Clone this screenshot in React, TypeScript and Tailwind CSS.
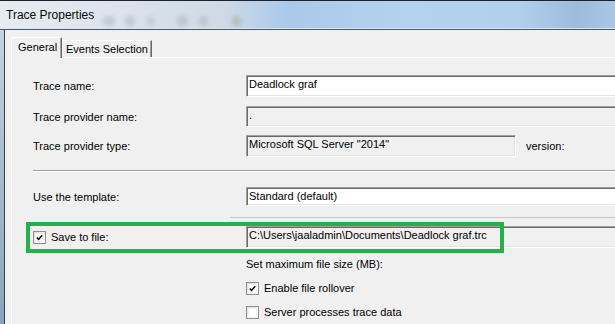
import React from "react";

function Sunken({ className = "", children }: { className?: string; children?: React.ReactNode }) {
  return (
    <div
      className={`shrink-0 border border-t-[#a0a0a0] border-l-[#a0a0a0] border-b-white border-r-white shadow-[inset_1px_1px_0_#696969,inset_-1px_-1px_0_#e3e3e3] pl-[2px] pt-px whitespace-nowrap overflow-hidden ${className}`}
    >
      {children}
    </div>
  );
}

function Check({ checked }: { checked?: boolean }) {
  return (
    <div className="w-[13px] h-[13px] shrink-0 border border-[#8e8f8f] bg-[linear-gradient(135deg,#dcdcdc,#ffffff)] p-px">
      <div className="w-full h-full bg-white border border-[#f4f4f4] flex items-center justify-center">
        {checked && (
          <svg width="9" height="9" viewBox="0 0 9 9">
            <path d="M1 4.5 L3.3 7 L8 1.5" fill="none" stroke="#000" strokeWidth="1.9" />
          </svg>
        )}
      </div>
    </div>
  );
}

const blobs = [
  { l: "left-[103px] w-[12px]", c: "bg-[#7c8894]" },
  { l: "left-[125px] w-[10px]", c: "bg-[#7c8894]" },
  { l: "left-[147px] w-[7px]", c: "bg-[#8894a0]" },
  { l: "left-[177px] w-[11px]", c: "bg-[#7c8894]" },
  { l: "left-[199px] w-[9px]", c: "bg-[#7c8894]" },
  { l: "left-[232px] w-[9px]", c: "bg-[#857540]" },
];

export default function App() {
  return (
    <div className="relative w-[615px] h-[324px] overflow-hidden bg-[#f0f0f0] font-['Liberation_Sans',Arial,sans-serif] text-[11px] leading-[14px] text-black">
      {/* title bar */}
      <div className="flex flex-col h-[30px]">
        <div className="h-px bg-[#1b232e]" />
        <div className="relative h-[27px] bg-[linear-gradient(to_right,#e6ebf0_0%,#dfe6ed_14%,#cfdae6_36%,#aac9ea_47%,#b4d2ef_66%,#b1d0ee_84%,#9dbcdc_94%,#a9c8e8_100%)]">
          {blobs.map((b, i) => (
            <div key={i} className={`absolute top-[15px] h-[10px] rounded-sm opacity-25 blur-[2px] ${b.l} ${b.c}`} />
          ))}
          <div className="relative pl-[6px] pt-[7px] text-[12px] leading-[14px] text-[#0a0a0a]">Trace Properties</div>
        </div>
        <div className="h-px bg-[#dfe8f1]" />
        <div className="h-px bg-[#4a5768]" />
      </div>

      <div className="flex h-[294px]">
        <div className="w-[4px] shrink-0 bg-[linear-gradient(to_bottom,#c4d2df,#88a3bf)]" />
        <div className="w-px shrink-0 bg-[#35414f]" />
        <div className="flex-1 min-w-0 pl-[6px] pt-[7px]">
          {/* tabs */}
          <div className="flex items-end h-[21px]">
            <div className="relative z-10 h-[21px] w-[51px] border-l border-t border-white border-r border-r-[#696969] shadow-[inset_-1px_0_0_#a0a0a0] bg-[#f0f0f0] pl-[6px] pt-[2px]">
              General
            </div>
            <div className="h-[17px] w-[90px] mb-px border-t border-white border-r border-r-[#696969] shadow-[inset_-1px_0_0_#a0a0a0] pl-[4px] pt-px whitespace-nowrap">
              Events Selection
            </div>
          </div>

          {/* panel */}
          <div className="-mt-px h-[300px] border-t border-l border-white pl-[21px]">
            <div className="mt-[17px] flex items-center h-[22px]">
              <div className="w-[213px] shrink-0">Trace name:</div>
              <Sunken className="w-[400px] h-[22px] bg-white">Deadlock graf</Sunken>
            </div>
            <div className="mt-[9px] flex items-center h-[21px]">
              <div className="w-[213px] shrink-0">Trace provider name:</div>
              <Sunken className="w-[400px] h-[21px]">.</Sunken>
            </div>
            <div className="mt-[8px] flex items-center h-[22px]">
              <div className="w-[213px] shrink-0">Trace provider type:</div>
              <Sunken className="w-[270px] h-[22px]">Microsoft SQL Server "2014"</Sunken>
              <div className="ml-[10px] shrink-0">version:</div>
            </div>

            <div className="mt-[13px] h-[2px] border-t border-[#a0a0a0] border-b border-b-white" />

            <div className="mt-[15px] flex items-center h-[19px]">
              <div className="w-[213px] shrink-0">Use the template:</div>
              <Sunken className="w-[400px] h-[19px] bg-white">Standard (default)</Sunken>
            </div>

            <div className="mt-[11px] ml-[197px] h-px bg-[#c8c8c8]" />

            <div className="mt-[8px] flex items-center h-[22px]">
              <div className="w-[213px] shrink-0 flex items-center gap-[5px]">
                <Check checked />
                <span>Save to file:</span>
              </div>
              <Sunken className="w-[400px] h-[22px]">C:\Users\jaaladmin\Documents\Deadlock graf.trc</Sunken>
            </div>

            <div className="pl-[213px]">
              <div className="mt-[9px] whitespace-nowrap">Set maximum file size (MB):</div>
              <div className="mt-[10px] flex items-center gap-[5px] h-[14px]">
                <Check checked />
                <span>Enable file rollover</span>
              </div>
              <div className="mt-[10px] flex items-center gap-[5px] h-[14px]">
                <Check />
                <span className="whitespace-nowrap">Server processes trace data</span>
              </div>
            </div>
          </div>
        </div>
      </div>

      {/* annotation */}
      <div className="absolute left-[26px] top-[222px] w-[478px] h-[31px] border-4 border-[#22b14c]" />
    </div>
  );
}
